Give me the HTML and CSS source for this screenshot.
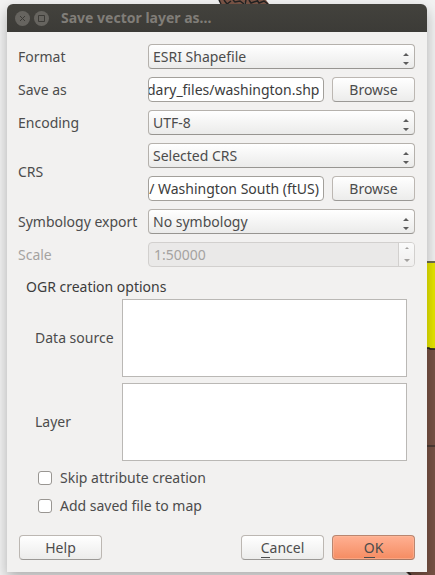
FILE: index.html
```html
<!DOCTYPE html>
<html lang="en">
<head>
<meta charset="utf-8">
<title>Save vector layer as...</title>
<link rel="stylesheet" href="styles.css">
</head>
<body>
<svg class="map" viewBox="0 0 435 575" preserveAspectRatio="xMaxYMin slice" aria-hidden="true">
  <path d="M219 0l2 4h23l2-4zM245 0v4h24l-3-4z" fill="#7b5547"/>
  <path d="M219 0l2 4M224 0l3 4 4-3M233 0l2 2 5-1 4 3M245 4l1-4M249 0l2 3 6-2M257 0l2 3 5-2 4 3" fill="none" stroke="#222" stroke-width="1.500"/>
  <path d="M420 262h15v87h-15z" fill="#e6e600"/>
  <path d="M420 262h15" stroke="#6f6f50" stroke-width="2"/>
  <path d="M420 348l10 0 5 1v226h-26l-3-3h14z" fill="#775244"/>
  <path d="M420 348h9l1 1h5M408 572l3 3" fill="none" stroke="#222" stroke-width="1.500"/>
  <path d="M427 446h8" stroke="#222"/>
</svg>
<main class="dialog">
  <header class="titlebar">
    <button class="wm" type="button" aria-label="Close"><svg viewBox="0 0 15 15"><path d="M5 5l5 5M10 5l-5 5"/></svg></button>
    <button class="wm" type="button" aria-label="Maximize"><svg viewBox="0 0 15 15"><path d="M4.500 4.500h6v6h-6z"/></svg></button>
    <h1>Save vector layer as...</h1>
  </header>
  <form class="content">
    <div class="fields">
      <label for="format">Format</label>
      <div class="combo"><select id="format"><option>ESRI Shapefile</option></select><svg viewBox="0 0 6 12"><path d="M0 3l3-3 3 3zM0 9h6l-3 3z"/></svg></div>
      <label for="path">Save as</label>
      <div class="pair"><input class="edit tail" id="path" type="text" value="dary_files/washington.shp"><button class="btn" type="button">Browse</button></div>
      <label for="encoding">Encoding</label>
      <div class="combo"><select id="encoding"><option>UTF-8</option></select><svg viewBox="0 0 6 12"><path d="M0 3l3-3 3 3zM0 9h6l-3 3z"/></svg></div>
      <label for="crs">CRS</label>
      <div class="stack">
        <div class="combo"><select id="crs"><option>Selected CRS</option></select><svg viewBox="0 0 6 12"><path d="M0 3l3-3 3 3zM0 9h6l-3 3z"/></svg></div>
        <div class="pair"><input class="edit tail" type="text" aria-label="CRS name" value="/ Washington South (ftUS)"><button class="btn" type="button">Browse</button></div>
      </div>
      <label for="symbology">Symbology export</label>
      <div class="combo"><select id="symbology"><option>No symbology</option></select><svg viewBox="0 0 6 12"><path d="M0 3l3-3 3 3zM0 9h6l-3 3z"/></svg></div>
      <label class="off" for="scale">Scale</label>
      <div class="spin"><input id="scale" type="text" value="1:50000" disabled><span class="steps"><svg viewBox="0 0 6 15"><path d="M1 2l2-2 2 2zM0 12h6l-3 3z"/></svg></span></div>
    </div>
    <fieldset class="options">
      <legend>OGR creation options</legend>
      <div class="areas">
        <label for="source">Data source</label>
        <textarea id="source"></textarea>
        <label for="layer">Layer</label>
        <textarea id="layer"></textarea>
      </div>
    </fieldset>
    <div class="checks">
      <label><input type="checkbox">Skip attribute creation</label>
      <label><input type="checkbox">Add saved file to map</label>
    </div>
    <footer class="actions">
      <button class="btn help" type="button">Help</button>
      <button class="btn" type="button"><span class="key">C</span>ancel</button>
      <button class="btn ok" type="submit"><span class="key">O</span>K</button>
    </footer>
  </form>
</main>
<script src="script.js"></script>
</body>
</html>
```
FILE: styles.css
```css
* { box-sizing: border-box; }

body {
  margin: 0;
  min-height: 100vh;
  padding: 4px 8px 3px 7px;
  overflow: hidden;
  background: #f2f2f2;
  color: #4c4c4c;
  font: 14px/20px "Noto Sans", "Open Sans", sans-serif;
}

input, select, textarea, button { font: inherit; color: inherit; margin: 0; }

.map {
  position: absolute;
  inset: 0;
  width: 100%;
  height: 100%;
}

.dialog {
  position: relative;
  background: #f2f1f0;
  border-radius: 6px 6px 0 0;
  box-shadow: 0 6px 14px rgba(0, 0, 0, 0.28);
}

.titlebar {
  display: flex;
  align-items: center;
  gap: 4px;
  height: 28px;
  padding: 0 8px;
  border-radius: 6px 6px 0 0;
  background: linear-gradient(#43423d, #3c3b37);
}

.titlebar h1 {
  margin: 0 0 0 8px;
  font: bold 14px/20px "Noto Sans", sans-serif;
  color: #807d78;
}

.wm {
  width: 15px;
  height: 15px;
  padding: 0;
  border: 0;
  border-radius: 50%;
  background: #66645f;
}

.wm svg { display: block; fill: none; stroke: #3c3b37; }

.content { padding: 12px 12px 12px 11px; }

.fields {
  display: grid;
  grid-template-columns: 122px minmax(0, 1fr);
  gap: 8px;
  align-items: center;
  white-space: nowrap;
}

.stack {
  display: grid;
  grid-template-columns: minmax(0, 1fr);
  gap: 8px;
}

.pair { display: flex; gap: 8px; }

.combo { position: relative; }

.combo select {
  display: block;
  appearance: none;
  width: 100%;
  height: 25px;
  padding: 0 20px 0 4px;
  border: 1px solid #b5b1ac;
  border-bottom-color: #979591;
  border-radius: 4px;
  background: linear-gradient(#fff, #ebebea);
}

.combo svg {
  position: absolute;
  right: 6px;
  top: 9px;
  width: 6px;
  height: 12px;
  fill: #5c5c5c;
  pointer-events: none;
}

.edit {
  flex: 1;
  min-width: 0;
  height: 25px;
  padding: 0 4px 0 0;
  border: 1px solid #a3a09b;
  border-radius: 4px;
  background: #fff;
  color: #3c3c3c;
}

.tail { text-align: right; }

.btn {
  flex: none;
  width: 83px;
  height: 25px;
  padding: 0;
  border: 1px solid #bcb7b2;
  border-bottom-color: #9b9996;
  border-radius: 4px;
  background: linear-gradient(#fff, #ececeb);
}

.off { color: #a5a3a1; }

.spin {
  display: flex;
  height: 25px;
  overflow: hidden;
  border: 1px solid #d2d0ce;
  border-radius: 4px;
  background: #eae9e8;
  color: #a5a3a1;
}

.spin input {
  flex: 1;
  min-width: 0;
  padding: 0 5px;
  border: 0;
  background: none;
}

.steps {
  display: grid;
  place-items: center;
  width: 16px;
  border-left: 1px solid #d2d0ce;
  background: linear-gradient(#fafafa, #f0efee);
}

.steps svg { width: 6px; height: 15px; fill: #a3a19f; }

.options {
  margin: 10px 0 0;
  padding: 0 8px 0 17px;
  border: 0;
}

.options legend {
  margin-left: -9px;
  padding: 0;
  color: #3c3c3c;
}

.areas {
  display: grid;
  grid-template-columns: 79px minmax(0, 1fr);
  gap: 6px 8px;
  align-items: center;
  padding-top: 2px;
  white-space: nowrap;
}

.areas textarea {
  display: block;
  width: 100%;
  height: 78px;
  resize: none;
  border: 1px solid #bab8b5;
  background: #fff;
}

.checks {
  display: grid;
  gap: 8px;
  padding: 7px 0 0 20px;
}

.checks label { display: flex; align-items: center; gap: 8px; }

.checks input {
  appearance: none;
  width: 14px;
  height: 14px;
  border: 1px solid #999692;
  border-radius: 3px;
  background: #fff;
}

.actions {
  display: flex;
  gap: 8px;
  padding-top: 19px;
}

.help { margin: 0 auto 0 1px; }

.key { border-bottom: 1px solid currentColor; }

.ok {
  border-color: #b98670;
  border-bottom-color: #a57865;
  background: linear-gradient(#ffb092, #f58c62);
  box-shadow: inset 0 0 0 1px rgba(255, 190, 160, 0.5);
}
```
FILE: script.js
```js
// Long values show their last characters.
document.querySelectorAll(".tail").forEach((field) => {
  field.scrollLeft = field.scrollWidth;
});
```
